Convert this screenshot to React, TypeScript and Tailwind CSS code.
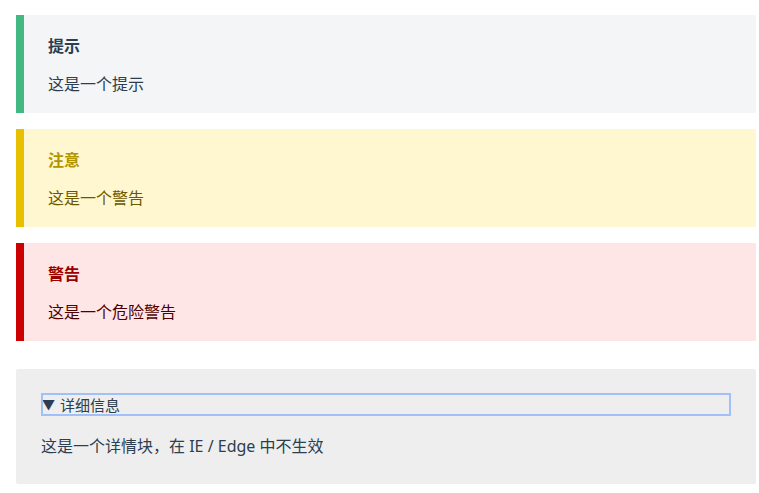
const blocks = [
  {
    title: "提示",
    body: "这是一个提示",
    box: "bg-[#f3f5f7] border-[#42b983] text-[#2c3e50]",
    head: "text-[#2c3e50]",
  },
  {
    title: "注意",
    body: "这是一个警告",
    box: "bg-[#fff7d0] border-[#e7c000] text-[#6b5900]",
    head: "text-[#b29400]",
  },
  {
    title: "警告",
    body: "这是一个危险警告",
    box: "bg-[#ffe6e6] border-[#cc0000] text-[#4d0000]",
    head: "text-[#990000]",
  },
];

export default function App() {
  return (
    <div
      className="bg-white min-h-[493px] px-4 pt-[15px] text-[16px] leading-[1.7]"
      style={{ fontFamily: '"Noto Sans", "Noto Sans CJK SC", sans-serif' }}
    >
      <div className="w-[740px] flex flex-col">
        {blocks.map((b) => (
          <div
            key={b.title}
            className={`border-l-8 px-6 pt-[18px] pb-[15px] mb-4 ${b.box}`}
          >
            <p className={`font-semibold h-[27px] leading-[27px] ${b.head}`}>
              {b.title}
            </p>
            <p className="mt-[11px] h-[27px] leading-[27px]">{b.body}</p>
          </div>
        ))}

        <details
          open
          className="mt-[12px] rounded-[2px] bg-[#eeeeee] text-[#2c3e50] px-[26px] pt-[25px] pb-[24px]"
        >
          <summary className="list-none [&::-webkit-details-marker]:hidden cursor-pointer h-[21px] leading-[20px] outline-2 outline-offset-[-1px] outline-[#a0c0f7] text-[15px] flex items-center gap-[5px]">
            <span className="text-[13px] leading-none">▼</span>
            <span>详细信息</span>
          </summary>
          <p className="mt-[18px] -ml-px h-[27px] leading-[27px]">这是一个详情块，在 IE / Edge 中不生效</p>
        </details>
      </div>
    </div>
  );
}
